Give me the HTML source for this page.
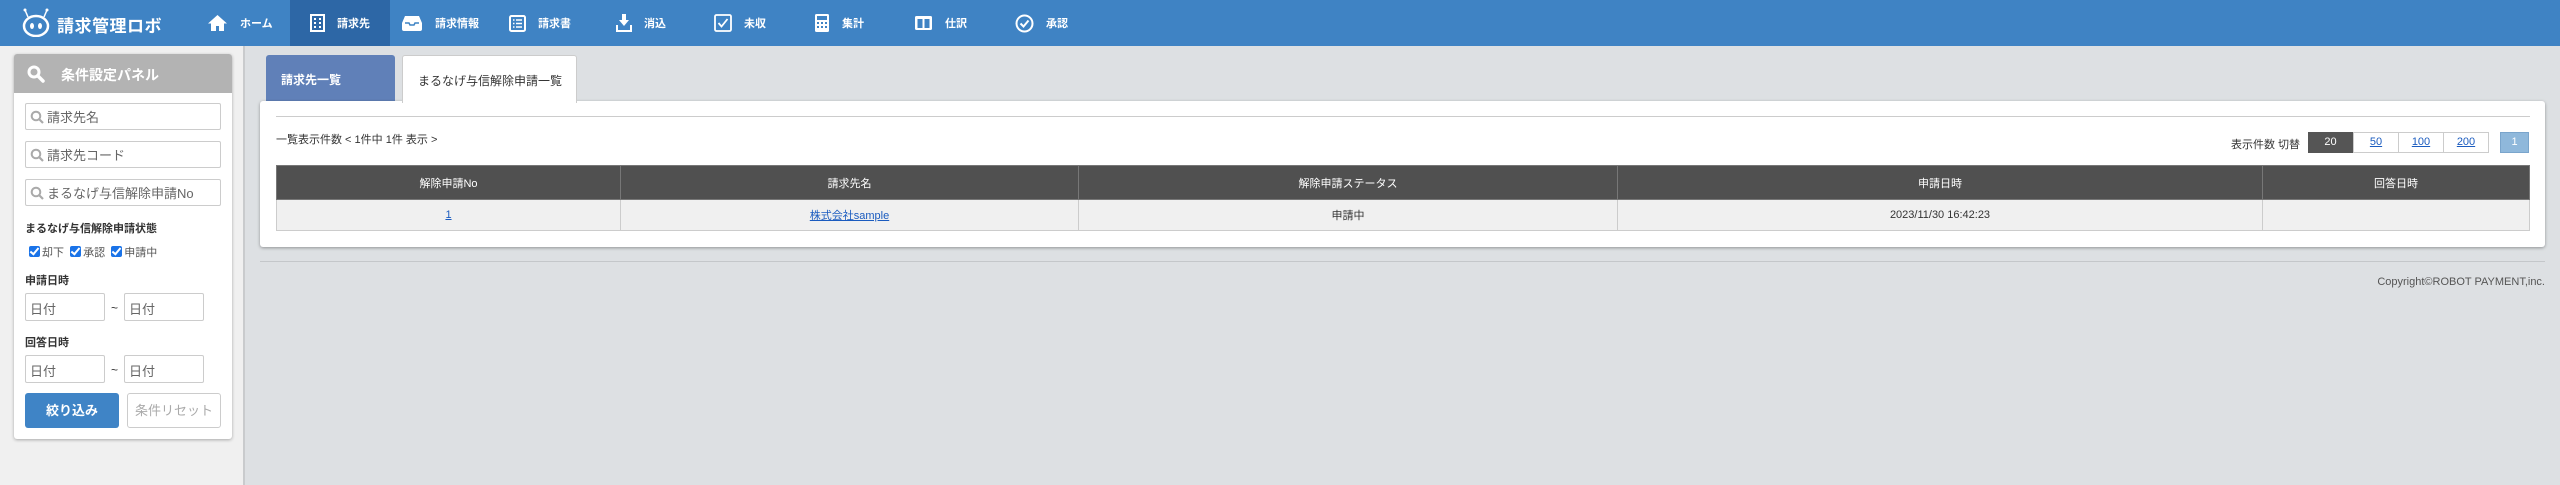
<!DOCTYPE html>
<html><head><meta charset="utf-8"><style>
*{box-sizing:border-box;margin:0;padding:0}
body{width:2560px;height:485px;overflow:hidden;background:#dde0e3;font-family:"Liberation Sans","Noto Sans CJK JP",sans-serif;font-size:12px;color:#333;position:relative}
.a{position:absolute}
#hd{left:0;top:0;width:2560px;height:46px;background:#3f83c4}
.nv{position:absolute;top:0;height:46px;display:flex;align-items:center;color:#fff;font-size:11px;font-weight:bold}
.nv svg{margin-right:12px}
#side{left:0;top:46px;width:245px;height:439px;background:#f0f0f0;border-right:2px solid #c9cbcd}
#panel{left:14px;top:54px;width:218px;height:385px;background:#fff;border-radius:3px;box-shadow:0 1px 3px rgba(0,0,0,.3)}
#ph{left:0;top:0;width:218px;height:39px;background:#b3b3b3;border-radius:3px 3px 0 0;color:#fff;font-weight:bold;font-size:14px}
.in{position:absolute;left:11px;width:196px;height:27px;border:1px solid #ccc;border-radius:2px;color:#666;font-size:13px;display:flex;align-items:center;padding-left:4px}
.in svg{margin-right:3px}
.lb{position:absolute;left:11px;font-weight:bold;font-size:11px;color:#333}
.dt{position:absolute;width:80px;height:28px;border:1px solid #ccc;border-radius:2px;color:#666;font-size:13px;padding:5px 0 0 4px}
.cb{display:inline-block;width:11px;height:11px;background:#1a73e8;border-radius:2px;vertical-align:-1px;margin-right:2px;position:relative}
.cb:after{content:"";position:absolute;left:3px;top:0px;width:3px;height:7px;border:solid #fff;border-width:0 2px 2px 0;transform:rotate(40deg)}
th,td{border:1px solid #ccc;text-align:center;font-size:11px}
th{background:#505050;color:#fff;font-weight:normal;height:34px;border-color:#777}
td{background:#f0f0f0;height:31px}
a{color:#1a5bbf;text-decoration:underline}
</style></head><body>
<div id="hd" class="a">
 <div class="a" style="left:290px;top:0;width:100px;height:46px;background:#2d67a6"></div>
 <svg class="a" style="left:21px;top:7px" width="30" height="30" viewBox="0 0 30 30"><circle cx="4" cy="3" r="1.5" fill="#fff"/><circle cx="26" cy="3" r="1.5" fill="#fff"/><path d="M4 3l3 7M26 3l-3 7" stroke="#fff" stroke-width="1.5"/><ellipse cx="15" cy="19" rx="12" ry="10" fill="none" stroke="#fff" stroke-width="2.5"/><ellipse cx="11" cy="19" rx="2" ry="3" fill="#fff"/><ellipse cx="19" cy="19" rx="2" ry="3" fill="#fff"/></svg>
 <div class="a" style="left:57px;top:12px;color:#fff;font-size:17px;font-weight:bold;letter-spacing:0.5px">請求管理ロボ</div>
 <div class="nv" style="left:207px"><svg width="21" height="18" viewBox="0 0 21 18"><path d="M10.5 1L1 9.5h3V17h5v-5h3v5h5V9.5h3z" fill="#fff"/></svg>ホーム</div>
 <div class="nv" style="left:310px"><svg width="15" height="18" viewBox="0 0 15 18"><path d="M1 1h13v16H1z" fill="none" stroke="#fff" stroke-width="2"/><path d="M4 4h2v2H4zM9 4h2v2H9zM4 8h2v2H4zM9 8h2v2H9zM4 12h2v2H4zM9 12h2v2H9z" fill="#fff"/><path d="M-1 17h17" stroke="#fff" stroke-width="2"/></svg>請求先</div>
 <div class="nv" style="left:401px"><svg width="22" height="16" viewBox="0 0 22 16"><path d="M4 1h14l3 7v6a2 2 0 0 1-2 2H3a2 2 0 0 1-2-2V8z" fill="#fff"/><path d="M4 8h4l1 2h4l1-2h4" fill="none" stroke="#3f83c4" stroke-width="1.5"/></svg>請求情報</div>
 <div class="nv" style="left:509px"><svg width="17" height="17" viewBox="0 0 17 17"><rect x="1" y="1" width="15" height="15" rx="1.5" fill="none" stroke="#fff" stroke-width="2"/><path d="M4 5h1.5M4 8.5h1.5M4 12h1.5M7 5h6M7 8.5h6M7 12h6" stroke="#fff" stroke-width="1.6"/></svg>請求書</div>
 <div class="nv" style="left:616px"><svg width="16" height="20" viewBox="0 0 16 20"><path d="M6 1h4v6h3l-5 6-5-6h3z" fill="#fff"/><path d="M1 12v6h14v-6" fill="none" stroke="#fff" stroke-width="2"/></svg>消込</div>
 <div class="nv" style="left:714px"><svg width="18" height="18" viewBox="0 0 18 18"><rect x="1" y="1" width="16" height="16" rx="1.5" fill="none" stroke="#fff" stroke-width="1.8"/><path d="M4.5 9l3 3.5L13.5 5" fill="none" stroke="#fff" stroke-width="1.8"/></svg>未収</div>
 <div class="nv" style="left:814px"><svg width="16" height="20" viewBox="0 0 16 20"><rect x="1" y="1" width="14" height="18" rx="1.5" fill="#fff"/><rect x="3" y="3" width="10" height="4" fill="#3f83c4"/><path d="M3 9h2v2H3zM7 9h2v2H7zM11 9h2v2h-2zM3 13h2v2H3zM7 13h2v2H7zM11 13h2v2h-2z" fill="#3f83c4"/></svg>集計</div>
 <div class="nv" style="left:914px"><svg width="19" height="16" viewBox="0 0 19 16"><rect x="1" y="1" width="17" height="14" rx="1.5" fill="#fff"/><rect x="3.5" y="4" width="5" height="9" fill="#3f83c4"/><rect x="10.5" y="4" width="5" height="9" fill="#3f83c4"/></svg>仕訳</div>
 <div class="nv" style="left:1015px"><svg width="19" height="19" viewBox="0 0 19 19"><circle cx="9.5" cy="9.5" r="8" fill="none" stroke="#fff" stroke-width="2"/><path d="M5.5 9.5l3 3 5-6" fill="none" stroke="#fff" stroke-width="2"/></svg>承認</div>
</div>

<div id="side" class="a"></div>
<div id="panel" class="a">
 <div id="ph" class="a"><svg class="a" style="left:13px;top:11px" width="18" height="18" viewBox="0 0 18 18"><circle cx="7" cy="7" r="5" fill="none" stroke="#fff" stroke-width="3"/><path d="M11 11l5 5" stroke="#fff" stroke-width="3.5" stroke-linecap="round"/></svg><div class="a" style="left:47px;top:11px">条件設定パネル</div></div>
 <div class="in" style="top:49px"><svg width="14" height="14" viewBox="0 0 14 14"><circle cx="6" cy="6" r="4.3" fill="none" stroke="#aaa" stroke-width="2"/><path d="M9 9l4 4" stroke="#aaa" stroke-width="2.2"/></svg>請求先名</div>
 <div class="in" style="top:87px"><svg width="14" height="14" viewBox="0 0 14 14"><circle cx="6" cy="6" r="4.3" fill="none" stroke="#aaa" stroke-width="2"/><path d="M9 9l4 4" stroke="#aaa" stroke-width="2.2"/></svg>請求先コード</div>
 <div class="in" style="top:125px"><svg width="14" height="14" viewBox="0 0 14 14"><circle cx="6" cy="6" r="4.3" fill="none" stroke="#aaa" stroke-width="2"/><path d="M9 9l4 4" stroke="#aaa" stroke-width="2.2"/></svg>まるなげ与信解除申請No</div>
 <div class="lb" style="top:166px">まるなげ与信解除申請状態</div>
 <div class="a" style="left:15px;top:190px;font-size:11px;color:#555"><span class="cb"></span>却下&nbsp;&nbsp;<span class="cb"></span>承認&nbsp;&nbsp;<span class="cb"></span>申請中</div>
 <div class="lb" style="top:218px">申請日時</div>
 <div class="dt" style="left:11px;top:239px">日付</div><div class="a" style="left:97px;top:247px;font-size:12px">~</div><div class="dt" style="left:110px;top:239px">日付</div>
 <div class="lb" style="top:280px">回答日時</div>
 <div class="dt" style="left:11px;top:301px">日付</div><div class="a" style="left:97px;top:309px;font-size:12px">~</div><div class="dt" style="left:110px;top:301px">日付</div>
 <div class="a" style="left:11px;top:339px;width:94px;height:35px;background:#3f84c6;border-radius:3px;color:#fff;font-size:13px;font-weight:bold;text-align:center;line-height:35px">絞り込み</div>
 <div class="a" style="left:113px;top:339px;width:94px;height:35px;border:1px solid #ccc;border-radius:3px;color:#aaa;font-size:13px;text-align:center;line-height:33px">条件リセット</div>
</div>

<div class="a" style="left:266px;top:55px;width:129px;height:47px;background:#6080b8;border-radius:3px 3px 0 0;color:#fff;font-weight:bold;font-size:12px;padding:16px 0 0 15px">請求先一覧</div>
<div class="a" style="left:260px;top:101px;width:2285px;height:146px;background:#fff;border-radius:3px;box-shadow:0 1px 3px rgba(0,0,0,.35)"></div>
<div class="a" style="left:402px;top:55px;width:175px;height:48px;background:#fff;border:1px solid #ccc;border-bottom:none;border-radius:3px 3px 0 0;font-size:12px;padding:16px 0 0 15px;color:#333">まるなげ与信解除申請一覧</div>
<div class="a" style="left:276px;top:116px;width:2254px;height:1px;background:#ccc"></div>
<div class="a" style="left:276px;top:131px;font-size:11px;color:#333">一覧表示件数 &lt; 1件中 1件 表示 &gt;</div>
<div class="a" style="left:2231px;top:136px;font-size:11px;color:#333">表示件数 切替</div>
<div class="a" style="left:2308px;top:132px;display:flex;height:21px;font-size:11px;line-height:19px;text-align:center">
 <div style="width:45px;background:#555;color:#fff;border:1px solid #555">20</div>
 <div style="width:46px;border:1px solid #ccc"><a>50</a></div>
 <div style="width:45px;border:1px solid #ccc;border-left:none"><a>100</a></div>
 <div style="width:45px;border:1px solid #ccc;border-left:none"><a>200</a></div>
</div>
<div class="a" style="left:2500px;top:132px;width:29px;height:21px;background:#8fb8db;border:1px solid #7aa5cc;color:#fff;font-size:11px;text-align:center;line-height:19px">1</div>
<table class="a" style="left:276px;top:165px;width:2254px;border-collapse:collapse">
<tr><th style="width:344px">解除申請No</th><th style="width:458px">請求先名</th><th style="width:539px">解除申請ステータス</th><th style="width:645px">申請日時</th><th>回答日時</th></tr>
<tr><td><a>1</a></td><td><a>株式会社sample</a></td><td>申請中</td><td>2023/11/30 16:42:23</td><td></td></tr>
</table>
<div class="a" style="left:260px;top:261px;width:2285px;height:1px;background:#c4c7ca"></div>
<div class="a" style="right:15px;top:276px;font-size:11px;color:#555">Copyright©ROBOT PAYMENT,inc.</div>
</body></html>
